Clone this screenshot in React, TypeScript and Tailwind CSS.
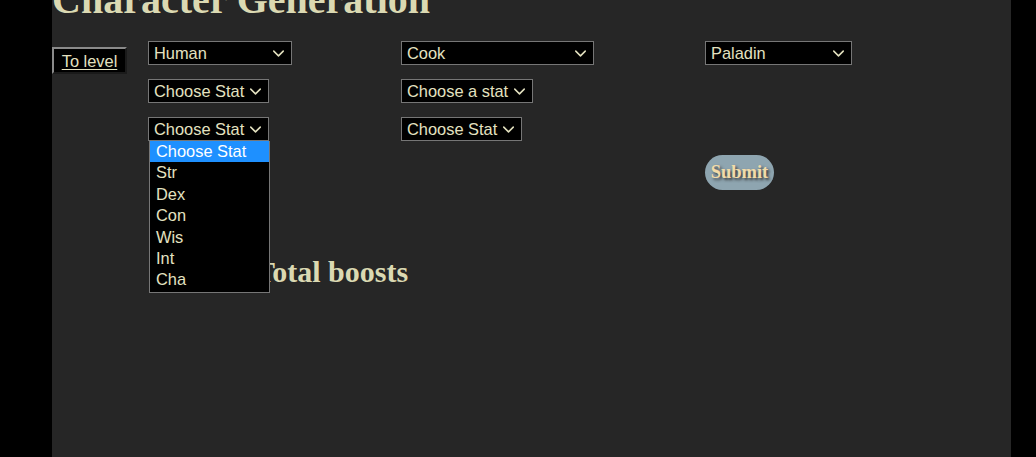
import { ChevronDown } from 'lucide-react';

const TEXT = 'text-[#e4e2c0]';
const STATS = ['Choose Stat', 'Str', 'Dex', 'Con', 'Wis', 'Int', 'Cha'];

function Select({ label, width }: { label: string; width: string }) {
  return (
    <div
      className={`${width} h-[24px] flex items-center justify-between border border-[#767676] bg-black pl-[5px] pr-[3px] text-[16.4px] leading-none ${TEXT}`}
    >
      <span className="whitespace-nowrap">{label}</span>
      <ChevronDown className="w-[19px] h-[19px] shrink-0" strokeWidth={1.9} />
    </div>
  );
}

export default function App() {
  return (
    <div className="min-h-[457px] bg-black font-['Liberation_Sans',Arial,sans-serif]">
      <main className="ml-[52px] w-[959px] h-[457px] overflow-hidden bg-[#262626]">
        <h1 className="-mt-[20px] h-[30px] font-['Liberation_Serif','Times_New_Roman',serif] text-[40px] font-bold leading-[40px] text-[#dbd9b2] whitespace-nowrap">
          Character Generation
        </h1>

        <div className="mt-[31px] flex">
          <button className="mt-[6px] h-[27px] w-[75px] self-start border-2 border-t-[#8a8a8a] border-l-[#8a8a8a] border-r-[#1a1a1a] border-b-[#1a1a1a] bg-black text-[16.4px] text-[#e4e2c0] underline underline-offset-2">
            To level
          </button>

          <div className="ml-[21px] grid grid-cols-[253px_304px_auto] gap-y-[14px]">
            <Select label="Human" width="w-[144px]" />
            <Select label="Cook" width="w-[193px]" />
            <Select label="Paladin" width="w-[147px]" />

            <Select label="Choose Stat" width="w-[121px]" />
            <Select label="Choose a stat" width="w-[132px]" />
            <div />

            <div className="relative">
              <Select label="Choose Stat" width="w-[121px]" />
              {/* open dropdown list */}
              <ul className="absolute left-[1px] top-[24px] z-10 w-[121px] border border-t-0 border-[#767676] bg-black pb-[1px] text-[16.4px] leading-[21.4px]">
                {STATS.map((s, i) => (
                  <li
                    key={s}
                    className={
                      i === 0
                        ? 'bg-[#1e90ff] pl-[6px] text-white'
                        : `pl-[6px] ${TEXT}`
                    }
                  >
                    {s}
                  </li>
                ))}
              </ul>
            </div>
            <Select label="Choose Stat" width="w-[121px]" />
            <div />

            <div />
            <div />
            <button className="h-[35px] w-[69px] rounded-full bg-[#8ea5b0] font-['Liberation_Serif','Times_New_Roman',serif] text-[18.5px] font-bold text-[#f2dba8] [text-shadow:2px_2px_3px_#333]">
              Submit
            </button>
          </div>
        </div>

        <h2 className="mt-[65px] ml-[203px] font-['Liberation_Serif','Times_New_Roman',serif] text-[30px] font-bold leading-[34px] text-[#dbd9b2]">
          Total boosts
        </h2>
      </main>
    </div>
  );
}
